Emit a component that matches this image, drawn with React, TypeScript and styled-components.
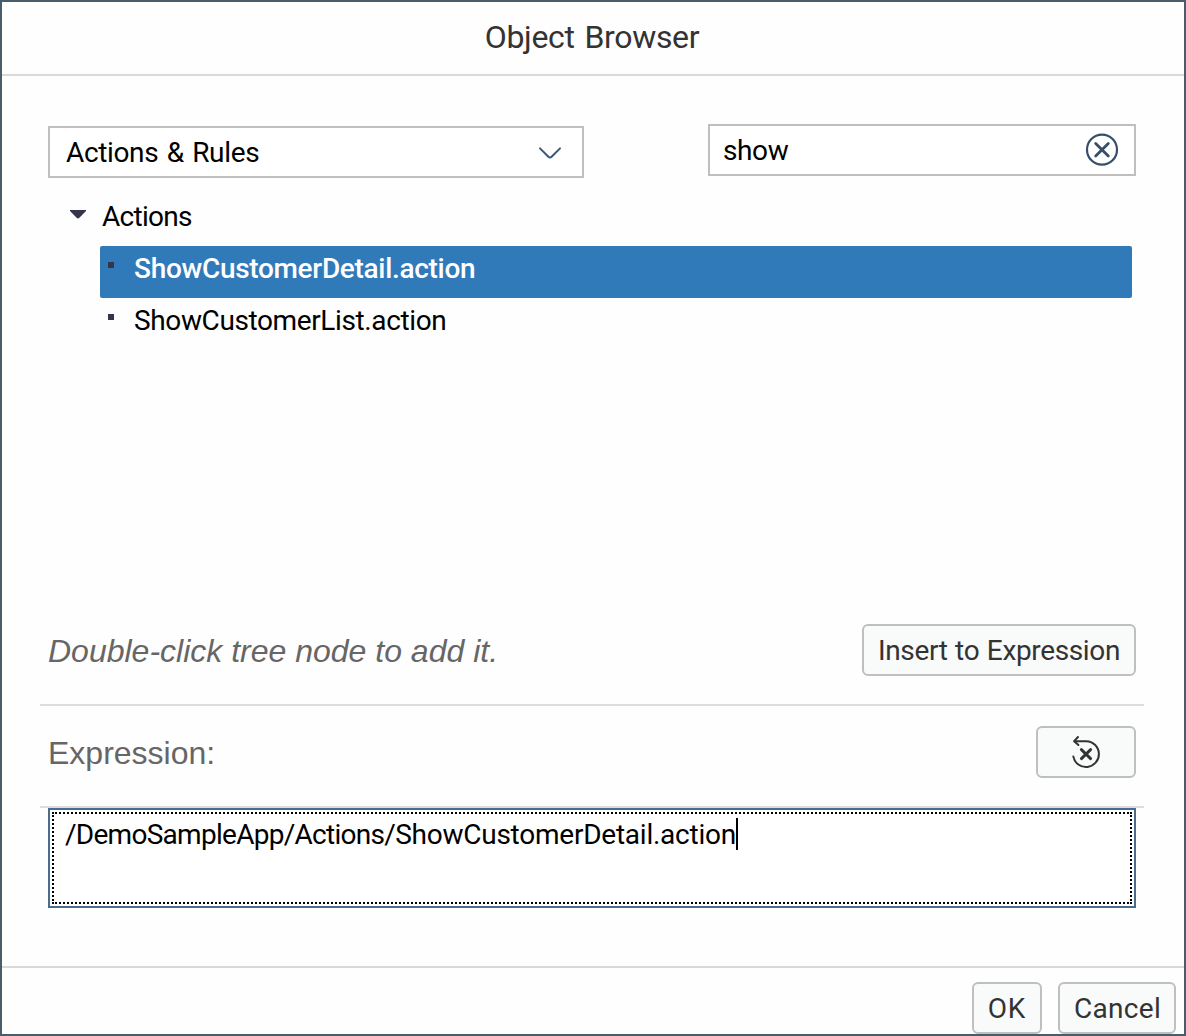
import React from 'react';
import styled, { createGlobalStyle } from 'styled-components';

const GlobalStyle = createGlobalStyle`
  *, *::before, *::after { box-sizing: border-box; }
  body { margin: 0; background: #fff; }
`;

const uiFont = 'Roboto, "Noto Sans", sans-serif';

const Dialog = styled.div`
  display: flex;
  flex-direction: column;
  width: 1186px;
  height: 1036px;
  overflow: hidden;
  border: 2px solid #4a5b69;
  background: #fefefe;
  color: #000;
  font: 400 28px/46px ${uiFont};
`;

const Header = styled.header`
  display: flex;
  justify-content: center;
  height: 74px;
  padding: 13px 2px 0 0;
  border-bottom: 2px solid #d9d9d9;
`;

const Title = styled.h1`
  margin: 0;
  color: #333;
  font: 400 32px/44px ${uiFont};
  letter-spacing: -0.35px;
  word-spacing: 2.4px;
`;

const Body = styled.main`
  display: flex;
  flex-direction: column;
  flex: 1;
  padding: 48px 40px 0 38px;
`;

const FilterBar = styled.div`
  display: flex;
  justify-content: space-between;
  align-items: flex-start;
  padding: 0 8px;
`;

const Select = styled.div`
  display: flex;
  align-items: center;
  justify-content: space-between;
  width: 536px;
  height: 52px;
  margin-top: 2px;
  padding: 0 20px 0 16px;
  border: 2px solid #bfbfbf;
  background: #fff;
  letter-spacing: -0.35px;
  word-spacing: 1.8px;
`;

const SearchField = styled.div`
  display: flex;
  align-items: center;
  justify-content: space-between;
  width: 428px;
  height: 52px;
  padding: 0 15px 0 13px;
  border: 2px solid #bfbfbf;
  background: #fff;
  letter-spacing: -0.4px;
`;

const FieldText = styled.span`
  padding-top: 2px;
`;

const Tree = styled.ul`
  flex: 1;
  margin: 0;
  padding: 16px 12px 0 30px;
  list-style: none;
`;

const Branch = styled.li`
  display: flex;
  height: 52px;
  letter-spacing: -0.7px;
`;

const BranchMark = styled.span`
  width: 32px;
  padding-top: 16px;
  line-height: 0;
`;

const Leaf = styled.li<{ $selected?: boolean }>`
  display: flex;
  height: 52px;
  margin-left: 30px;
  padding-left: 8px;
  border-radius: 2px;
  background: ${(p) => (p.$selected ? '#317ab9' : 'transparent')};
  color: ${(p) => (p.$selected ? '#fff' : '#000')};
  font-weight: ${(p) => (p.$selected ? 500 : 400)};
  letter-spacing: ${(p) => (p.$selected ? '-0.31px' : '-0.38px')};

  &::before {
    content: '';
    width: 6px;
    height: 6px;
    margin: 16px 20px 0 0;
    background: #34344a;
  }
`;

const Band = styled.div<{ $height: number }>`
  display: flex;
  align-items: flex-start;
  justify-content: space-between;
  height: ${(p) => p.$height}px;
  padding: 0 8px;
  border-bottom: 2px solid #dbdbe0;
`;

const Caption = styled.span<{ $italic?: boolean; $top: number }>`
  padding-top: ${(p) => p.$top}px;
  color: #666;
  font: ${(p) => (p.$italic ? 'italic' : 'normal')} 400 32px/44px "Liberation Sans", Arial, sans-serif;
`;

const Button = styled.button<{ $width: number; $tracking?: number; $top?: number }>`
  display: flex;
  align-items: center;
  justify-content: center;
  width: ${(p) => p.$width}px;
  height: 52px;
  margin: ${(p) => p.$top ?? 0}px 0 0;
  padding: 0;
  border: 2px solid #bfbfbf;
  border-radius: 6px;
  background: #f9fafa;
  color: #333;
  font: 400 28px/44px ${uiFont};
  letter-spacing: ${(p) => p.$tracking ?? 0}px;
  word-spacing: 1px;
  white-space: nowrap;
`;

const Editor = styled.div`
  height: 100px;
  margin: 0 8px 58px;
  padding: 2px;
  border: 2px solid #4a6c8c;
  background: #fff;
`;

const FocusRing = styled.div`
  display: flex;
  align-items: flex-start;
  height: 92px;
  padding: 0 12px 0 11px;
  border: 2px dotted #000;
  line-height: 42px;
  letter-spacing: -0.24px;
`;

const Folder = styled.span`
  letter-spacing: -0.72px;
`;

const TextCursor = styled.span`
  width: 2px;
  height: 32px;
  margin-top: 4px;
  background: #000;
`;

const Footer = styled.footer`
  display: flex;
  justify-content: flex-end;
  gap: 16px;
  height: 68px;
  padding: 14px 8px 0;
  border-top: 2px solid #d9d9d9;
`;

const ChevronIcon = () => (
  <svg width="24" height="16" viewBox="0 0 24 16" fill="none" stroke="#3a5773" strokeWidth="2" strokeLinecap="round">
    <path d="M2 4.4 10.4 12.7Q12 14.2 13.6 12.7L22 4.4" />
  </svg>
);

const ClearIcon = () => (
  <svg width="34" height="34" viewBox="0 0 34 34" fill="none" stroke="#354f69">
    <circle cx="17" cy="16.7" r="15" strokeWidth="2.2" />
    <path d="m10.7 10.4 12.6 12.6m0-12.6L10.7 23" strokeWidth="2.8" strokeLinecap="round" />
  </svg>
);

const CaretIcon = () => (
  <svg width="16" height="10" viewBox="0 0 16 10">
    <path d="M0 0H16V1L9.4 7.8Q8 9.2 6.6 7.8L0 1Z" fill="#34344a" />
  </svg>
);

const ResetIcon = () => (
  <svg width="32" height="36" viewBox="0 0 32 36" fill="none" stroke="#333" strokeWidth="2" strokeLinecap="round" strokeLinejoin="round">
    <path d="M4.4 7.2H16.2A12.9 12.9 0 1 1 3.3 22.4" />
    <path d="M8 3 4.2 7.2 8.4 11" />
    <path d="m11.4 15.6 9.2 9m0-9-9.2 9" strokeWidth="2.9" />
  </svg>
);

const ButtonText = styled.span<{ $shift?: number }>`
  padding: 2px 0 0 ${(p) => p.$shift ?? 0}px;
`;

export default function App() {
  return (
    <>
      <GlobalStyle />
      <Dialog>
        <Header>
          <Title>Object Browser</Title>
        </Header>
        <Body>
          <FilterBar>
            <Select>
              <FieldText>Actions &amp; Rules</FieldText>
              <ChevronIcon />
            </Select>
            <SearchField>
              <FieldText>show</FieldText>
              <ClearIcon />
            </SearchField>
          </FilterBar>
          <Tree>
            <Branch>
              <BranchMark>
                <CaretIcon />
              </BranchMark>
              Actions
            </Branch>
            <Leaf $selected>ShowCustomerDetail.action</Leaf>
            <Leaf>ShowCustomerList.action</Leaf>
          </Tree>
          <Band $height={82}>
            <Caption $italic $top={5}>Double-click tree node to add it.</Caption>
            <Button $width={274} $tracking={-0.36}>
              <ButtonText>Insert to Expression</ButtonText>
            </Button>
          </Band>
          <Band $height={102}>
            <Caption $top={25}>Expression:</Caption>
            <Button $width={100} $top={20} aria-label="Clear expression">
              <ResetIcon />
            </Button>
          </Band>
          <Editor>
            <FocusRing>
              <span>
                <Folder>/DemoSampleApp/Actions/</Folder>ShowCustomerDetail.action
              </span>
              <TextCursor />
            </FocusRing>
          </Editor>
        </Body>
        <Footer>
          <Button $width={70} $tracking={0.8}>
            <ButtonText>OK</ButtonText>
          </Button>
          <Button $width={118} $tracking={0.3}>
            <ButtonText $shift={1}>Cancel</ButtonText>
          </Button>
        </Footer>
      </Dialog>
    </>
  );
}
